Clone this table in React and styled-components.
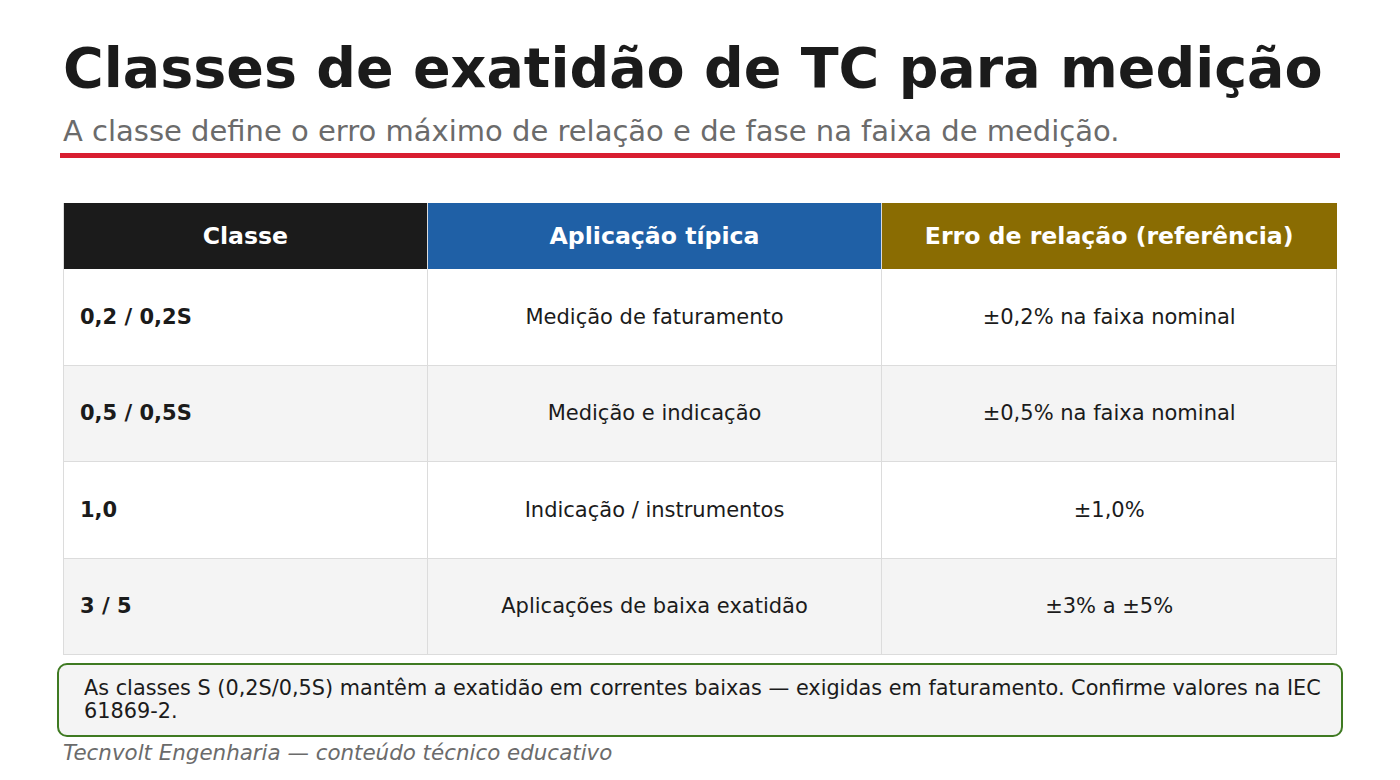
import styled, { createGlobalStyle } from "styled-components";

const GlobalStyle = createGlobalStyle`
  html, body {
    margin: 0;
    padding: 0;
    background: #ffffff;
  }
  body {
    font-family: "DejaVu Sans", Verdana, sans-serif;
    color: #1b1b1b;
  }
`;

const Page = styled.div`
  width: 1400px;
  height: 780px;
  box-sizing: border-box;
  padding: 35px 63px 0;
  display: flex;
  flex-direction: column;
  overflow: hidden;
`;

const Header = styled.header`
  display: flex;
  flex-direction: column;
`;

const Title = styled.h1`
  margin: 0;
  font-size: 55.5px;
  font-weight: bold;
  line-height: 66px;
  color: #1b1b1b;
  white-space: nowrap;
`;

const Subtitle = styled.p`
  margin: 12px 0 0;
  font-size: 29px;
  line-height: 36px;
  color: #6b6b6b;
  white-space: nowrap;
`;

const Rule = styled.div`
  height: 5px;
  margin: 4px -3px 0;
  background: #d81e30;
`;

const Table = styled.div`
  margin-top: 45px;
  display: grid;
  grid-template-columns: 2fr 2.5fr 2.5fr;
  border-left: 1px solid #dcdcdc;
`;

const HeadCell = styled.div`
  height: 66px;
  display: flex;
  align-items: center;
  justify-content: center;
  background: ${(p) => p.$bg};
  color: #ffffff;
  font-size: 23.6px;
  font-weight: bold;
  border-right: 1px solid ${(p) => p.$edge || "#dcdcdc"};
  box-sizing: border-box;
`;

const Cell = styled.div`
  height: 96.5px;
  display: flex;
  align-items: center;
  justify-content: ${(p) => (p.$first ? "flex-start" : "center")};
  padding: ${(p) => (p.$first ? "0 16px" : "0")};
  background: ${(p) => (p.$alt ? "#f4f4f4" : "#ffffff")};
  font-size: 21px;
  font-weight: ${(p) => (p.$first ? "bold" : "normal")};
  color: #1b1b1b;
  border-right: 1px solid #dcdcdc;
  border-bottom: 1px solid #dcdcdc;
  box-sizing: border-box;
`;

const Note = styled.div`
  margin: 8px -6px 0;
  padding: 12px 14px 12px 25px;
  border: 2px solid #3f7a22;
  border-radius: 10px;
  background: #f4f4f4;
  font-size: 20.8px;
  line-height: 23px;
  color: #1b1b1b;
`;

const Footer = styled.p`
  margin: 3px 0 0;
  font-size: 21.4px;
  line-height: 26px;
  font-style: italic;
  color: #6b6b6b;
`;

const rows = [
  ["0,2 / 0,2S", "Medição de faturamento", "±0,2% na faixa nominal"],
  ["0,5 / 0,5S", "Medição e indicação", "±0,5% na faixa nominal"],
  ["1,0", "Indicação / instrumentos", "±1,0%"],
  ["3 / 5", "Aplicações de baixa exatidão", "±3% a ±5%"],
];

const App = () => {
  return (
    <>
      <GlobalStyle />
      <Page>
        <Header>
          <Title>Classes de exatidão de TC para medição</Title>
          <Subtitle>
            A classe define o erro máximo de relação e de fase na faixa de medição.
          </Subtitle>
          <Rule />
        </Header>

        <Table>
          <HeadCell $bg="#1b1b1b">Classe</HeadCell>
          <HeadCell $bg="#1f60a6">Aplicação típica</HeadCell>
          <HeadCell $bg="#8a6c02" $edge="#8a6c02">
            Erro de relação (referência)
          </HeadCell>
          {rows.map((row, i) =>
            row.map((text, j) => (
              <Cell key={`${i}-${j}`} $first={j === 0} $alt={i % 2 === 1}>
                {text}
              </Cell>
            ))
          )}
        </Table>

        <Note>
          As classes S (0,2S/0,5S) mantêm a exatidão em correntes baixas — exigidas em
          faturamento. Confirme valores na IEC 61869-2.
        </Note>
        <Footer>Tecnvolt Engenharia — conteúdo técnico educativo</Footer>
      </Page>
    </>
  );
};

export default App;
